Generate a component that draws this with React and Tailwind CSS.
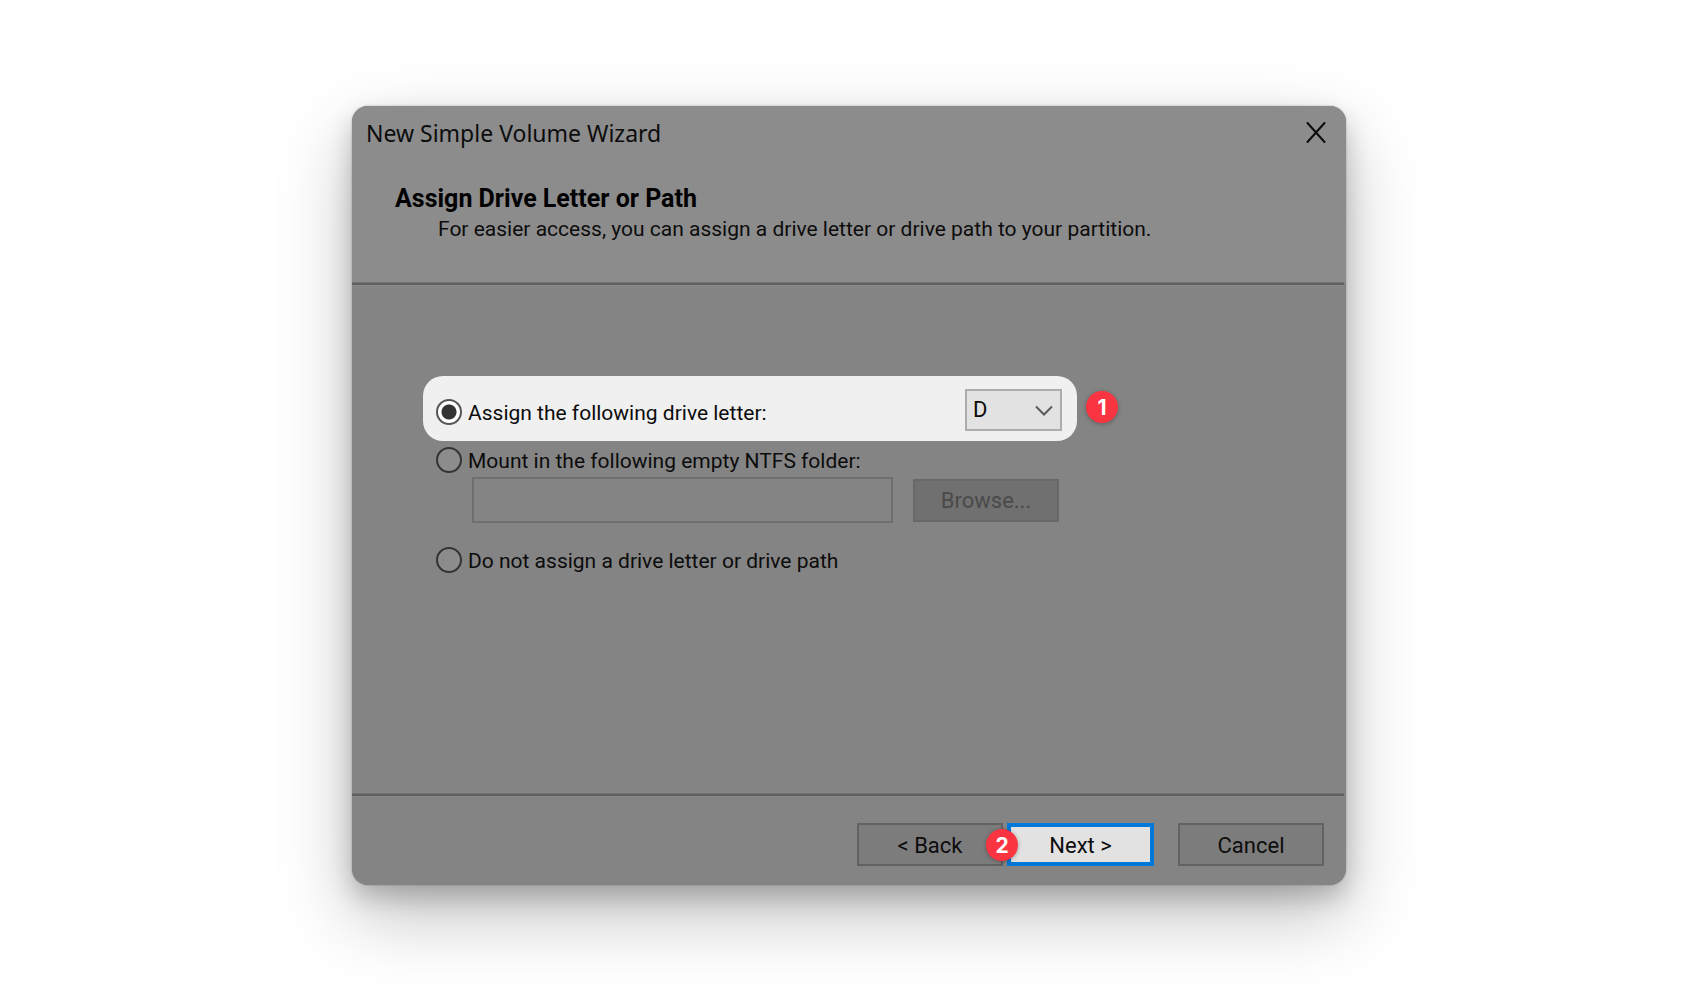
import { useState } from "react";

const BUTTON = "h-[43px] w-[146px] border-2 pt-[2px] text-[22px] leading-[28px]";

function StepBadge({ number, className }) {
  return (
    <span
      className={`absolute flex h-8 w-8 items-center justify-center rounded-full bg-[#fb3442] font-['Inter',sans-serif] text-[21px] font-bold leading-none text-white shadow-[0_1px_4px_rgba(0,0,0,0.3)] ${className}`}
    >
      {number}
    </span>
  );
}

function Divider() {
  return (
    <hr className="mr-[2px] h-1 border-0 border-t border-b border-t-[#747474] border-b-[#8a8a8a] bg-[#5f5f5f]" />
  );
}

function RadioOption({ value, selected, onSelect, children }) {
  const checked = value === selected;

  return (
    <label className="flex items-center gap-[6px] text-[21px] leading-[28px]">
      <input
        type="radio"
        name="assignment"
        value={value}
        checked={checked}
        onChange={() => onSelect(value)}
        className="h-[26px] w-[26px] shrink-0 appearance-none rounded-full border-2 border-[#333] bg-[#8c8c8c] checked:border-[#555] checked:bg-[radial-gradient(circle,#333_7px,#fff_8px)]"
      />
      <span className="pt-[2px]">{children}</span>
    </label>
  );
}

export default function App() {
  const [assignment, setAssignment] = useState("letter");
  const [driveLetter, setDriveLetter] = useState("D");

  return (
    <div className="min-h-screen bg-white px-6 pt-[106px] pb-[108px] font-['Roboto',sans-serif] text-[#0c0c0c]">
      <div className="mx-auto w-full max-w-[994px] rounded-[16px] bg-[#848484] shadow-[0_0_2px_rgba(0,0,0,0.3),0_12px_24px_rgba(0,0,0,0.2),0_30px_72px_rgba(0,0,0,0.25)]">
        {/* Title bar and heading */}
        <header className="h-[176px] rounded-t-[16px] bg-[#8c8c8c]">
          <div className="flex items-center justify-between pt-[10px] pr-[18px] pl-[14px]">
            <h1 className="font-['Noto_Sans',sans-serif] text-[23px] leading-[34px]">
              New Simple Volume Wizard
            </h1>
            <button type="button" aria-label="Close" className="p-[2px]">
              <svg
                viewBox="0 0 20 22"
                className="h-[22px] w-5"
                fill="none"
                stroke="#0c0c0c"
                strokeWidth="2"
                strokeLinecap="round"
              >
                <path d="M1.5 1 18.5 20M18.5 1 1.5 20" />
              </svg>
            </button>
          </div>
          <div className="pt-[34px] pl-[43px]">
            <h2 className="text-[25px] font-bold leading-[30px] text-black">
              Assign Drive Letter or Path
            </h2>
            <p className="pl-[43px] text-[21px] leading-[30px]">
              For easier access, you can assign a drive letter or drive path to
              your partition.
            </p>
          </div>
        </header>
        <Divider />

        {/* Options */}
        <main className="min-h-[507px] pt-[90px] pl-[71px]">
          <fieldset aria-label="Drive letter or path" className="max-w-[654px]">
            <div className="relative flex h-[65px] items-center justify-between rounded-[20px] bg-[#f0f0f0] pt-[7px] pr-[15px] pl-[13px]">
              <RadioOption
                value="letter"
                selected={assignment}
                onSelect={setAssignment}
              >
                Assign the following drive letter:
              </RadioOption>
              <div className="relative mb-[4px]">
                <select
                  aria-label="Drive letter"
                  value={driveLetter}
                  onChange={(e) => setDriveLetter(e.target.value)}
                  className="block h-[42px] w-[97px] appearance-none border-2 border-[#adadad] bg-[#e2e2e2] pl-[6px] text-[22px] leading-[28px]"
                >
                  <option>D</option>
                  <option>E</option>
                  <option>F</option>
                </select>
                <svg
                  viewBox="0 0 18 11"
                  className="pointer-events-none absolute top-4 right-[9px] h-[11px] w-[18px]"
                  fill="none"
                  stroke="#5a5a5a"
                  strokeWidth="2"
                >
                  <path d="M1 1.5 9 9.5 17 1.5" />
                </svg>
              </div>
              <StepBadge number={1} className="top-[15px] -right-[41px]" />
            </div>

            <div className="flex h-9 items-center pt-[2px] pl-[13px]">
              <RadioOption
                value="folder"
                selected={assignment}
                onSelect={setAssignment}
              >
                Mount in the following empty NTFS folder:
              </RadioOption>
            </div>
            <div className="flex items-center gap-5 pl-[49px]">
              <input
                type="text"
                aria-label="NTFS folder"
                disabled={assignment !== "folder"}
                className="h-[46px] w-[421px] border-2 border-[#6f6f6f] bg-[#848484] px-2 text-[22px]"
              />
              <button
                type="button"
                disabled={assignment !== "folder"}
                className={`${BUTTON} border-[#686868] bg-[#707070] disabled:text-[#4a4a4a]`}
              >
                Browse...
              </button>
            </div>

            <div className="mt-[19px] flex h-9 items-center pl-[13px]">
              <RadioOption
                value="none"
                selected={assignment}
                onSelect={setAssignment}
              >
                Do not assign a drive letter or drive path
              </RadioOption>
            </div>
          </fieldset>
        </main>
        <Divider />

        {/* Navigation */}
        <footer className="flex justify-end pt-[26px] pr-[22px] pb-[19px]">
          <button type="button" className={`${BUTTON} border-[#626262] bg-[#7c7c7c]`}>
            &lt; Back
          </button>
          <div className="relative mr-6 ml-1">
            <button
              type="button"
              className="block h-[43px] w-[147px] border-4 border-[#0078d7] bg-[#e2e2e2] pt-[2px] text-[22px] leading-[28px]"
            >
              Next &gt;
            </button>
            <StepBadge number={2} className="top-[6px] -left-[21px]" />
          </div>
          <button type="button" className={`${BUTTON} border-[#626262] bg-[#7c7c7c]`}>
            Cancel
          </button>
        </footer>
      </div>
    </div>
  );
}
